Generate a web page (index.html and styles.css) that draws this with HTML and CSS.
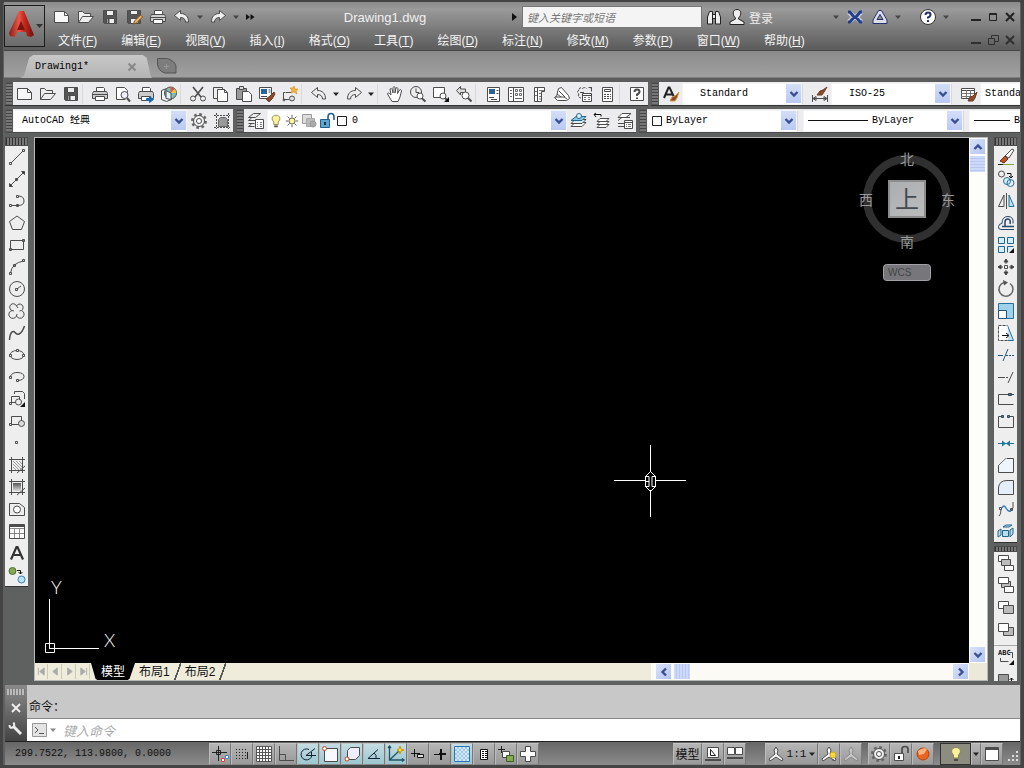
FILE: index.html
```html
<!DOCTYPE html>
<html lang="zh-CN">
<head>
<meta charset="utf-8">
<title>Drawing1.dwg</title>
<link rel="stylesheet" href="styles.css">
</head>
<body>
<svg class="sprite" aria-hidden="true">
  <defs>
    <linearGradient id="red" x1="0" x2="1"><stop offset="0" stop-color="#8d1a14"/><stop offset=".4" stop-color="#e8584a"/><stop offset=".6" stop-color="#c92a1c"/><stop offset="1" stop-color="#6e0f0a"/></linearGradient>
    <linearGradient id="shade" x2="0" y2="1"><stop offset="0" stop-color="#555"/><stop offset="1" stop-color="#ddd"/></linearGradient>
    <linearGradient id="face" x2="1" y2="1"><stop offset="0" stop-color="#aaadb0"/><stop offset="1" stop-color="#bdbdbd"/></linearGradient>
    <pattern id="check" width="4" height="4" patternUnits="userSpaceOnUse"><rect width="4" height="4" fill="#9cc8f0" stroke="none"/><rect width="2" height="2" fill="#d5e9fa" stroke="none"/><rect x="2" y="2" width="2" height="2" fill="#d5e9fa" stroke="none"/></pattern>
  </defs>
  <symbol id="new" viewBox="0 0 18 18"><path fill="#f8f8f8" d="M1.500 3.500h10l4 4v7h-14z"/><path d="M11.500 3.500v4h4"/></symbol>
  <symbol id="open" viewBox="0 0 18 18"><path fill="#eee" d="M1.500 14.500v-11h4l2 2h6v3"/><path fill="#eee" d="M1.500 14.500l4-6h11l-5 6z"/></symbol>
  <symbol id="save" viewBox="0 0 18 18"><path fill="#555" d="M2.500 2.500h13v13h-12l-1-1z"/><path fill="#eee" d="M5.500 2.500h7v5h-7zM5.500 10.500h8v5h-8z"/><path d="M7.500 11v4" stroke-width="2"/></symbol>
  <symbol id="saveas" viewBox="0 0 18 18"><path fill="#555" d="M2.500 2.500h13v13h-12l-1-1z"/><path fill="#eee" d="M5.500 2.500h7v4h-7zM5.500 10.500h8v5h-8z"/><path fill="#e9b568" d="M9.500 13l6-6 2 2-6 6-3 1z" stroke="#805020"/></symbol>
  <symbol id="print" viewBox="0 0 18 18"><path fill="#fff" d="M5.500 6.500v-4h7l1 1v3"/><path fill="#ccc" d="M2.500 6.500h13l1 2v5h-15v-5z"/><path fill="#fff" d="M4.500 11.500h9v4h-9z"/><path d="M2 9.500h14"/></symbol>
  <symbol id="preview" viewBox="0 0 18 18"><path fill="#fff" d="M11.500 14.500h-9v-12h8l3 3v2"/><circle cx="10.500" cy="10" r="3.500" fill="#eef"/><path d="M13 13l3 3.500" stroke-width="2"/></symbol>
  <symbol id="plot" viewBox="0 0 18 18"><path fill="#fff" d="M5.500 6.500v-4h7l1 1v3"/><path fill="#ccc" d="M2.500 6.500h13l1 2v5h-15v-5z"/><path fill="#fff" d="M4.500 11.500h9v4h-9z"/><path fill="#1768b5" stroke="#1768b5" d="M9.500 13.500h3v-2l4 3-4 3v-2h-3z"/></symbol>
  <symbol id="globe" viewBox="0 0 18 18"><path fill="#f4f4f4" d="M1.500 5.500l5-2 5 2v9l-5 2-5-2z"/><circle cx="10.500" cy="8" r="6" fill="#7fc0b0"/><path d="M10.500 2v6l4-4a6 6 0 0 0-4-2z" fill="#e05040" stroke="none"/><path d="M10.500 8h6a6 6 0 0 0-2-4z" fill="#f0c040" stroke="none"/><path d="M6 5.500v8l5 1V8z" fill="#dff0ff"/></symbol>
  <symbol id="cut" viewBox="0 0 18 18"><path stroke-width="1.600" d="M4 2l8 10M14 2L6 12"/><circle cx="4" cy="13.500" r="2.500"/><circle cx="14" cy="13.500" r="2.500"/></symbol>
  <symbol id="copy" viewBox="0 0 18 18"><path fill="#eee" d="M1.500 2.500h9v11h-9z"/><path fill="#fff" d="M5.500 4.500h7l3 3v9h-10z"/><path d="M12.500 4.500v3h3"/></symbol>
  <symbol id="paste" viewBox="0 0 18 18"><path fill="#999" d="M1.500 3.500h10v11h-10z"/><path fill="#ddd" d="M4.500 1.500h4v3h-4z"/><path fill="#fff" d="M7.500 6.500h6l3 3v7h-9z"/></symbol>
  <symbol id="brush" viewBox="0 0 18 18"><path fill="#fff" d="M1.500 2.500h12v11h-12z"/><path fill="#29639a" stroke="none" d="M3 4h6v5H3z"/><path d="M10.500 5h2M10.500 7h2M3 11.500h6"/><path fill="#8b4a2b" stroke="#6c3a20" d="M16 7l-4 4-4 3 3 3 3-3 3-5z"/></symbol>
  <symbol id="block" viewBox="0 0 18 18"><path d="M4.500 7.500h-2v7h6M5 7.500h5"/><circle cx="11" cy="13.500" r="2.500" fill="#ddd"/><circle cx="3" cy="15" r="1"/><path fill="#f7b23c" stroke="#d58a1a" stroke-width=".6" d="M13 1l1 3 3 0-2 2 1 3-3-2-3 1 1-3-2-2h3z"/></symbol>
  <symbol id="undo" viewBox="0 0 18 18"><path fill="#eee" d="M1.500 7.500l6-5v3c5 0 8 3 8 8.500h-3c0-3-2-4.500-5-4.500v3z"/></symbol>
  <symbol id="redo" viewBox="0 0 18 18"><path fill="#eee" d="M16.500 7.500l-6-5v3c-5 0-8 3-8 8.500h3c0-3 2-4.500 5-4.500v3z"/></symbol>
  <symbol id="caret" viewBox="0 0 8 8"><path d="M1 2.500h6L4 6z" fill="currentColor" stroke="none"/></symbol>
  <symbol id="more" viewBox="0 0 10 8"><path d="M1 1l4 3-4 3zM5.500 1l4 3-4 3z" fill="#111" stroke="none"/></symbol>
  <symbol id="pan" viewBox="0 0 18 18"><path fill="#fff" d="M6 16.500L1.500 9c0-2 2-1 3.500 1L4 4c1-1 2 0 2.500 1L7 8V2.500c1-1 2-1 2 0V8l1-5c1-1 2 0 2 1l-.500 4.500L13.500 5c1-1 2 0 2 1L14 12l-2 4.500z"/></symbol>
  <symbol id="zoomrt" viewBox="0 0 18 18"><circle cx="7" cy="7" r="5.500" fill="#eee"/><path d="M7 3.500v4h3"/><circle cx="11" cy="11" r="3" fill="#fff"/><path stroke-width="2" d="M13 13.500l3.500 3"/></symbol>
  <symbol id="zoomwin" viewBox="0 0 18 18"><path fill="#fff" d="M1.500 2.500h11v10h-11z"/><circle cx="11" cy="11" r="3" fill="#fff"/><path stroke-width="2" d="M13 13l2 2"/><path fill="#111" stroke="none" d="M17 12v5h-5z"/></symbol>
  <symbol id="zoomprev" viewBox="0 0 18 18"><path fill="#ddd" d="M1.500 5.500l4-4v2.500h5v3.500h-5V10z"/><circle cx="10.500" cy="10.500" r="3.500" fill="#fff"/><path stroke-width="2" d="M13 13l3.500 3.500"/></symbol>
  <symbol id="props" viewBox="0 0 18 18"><path fill="#fff" d="M3.500 2.500h12v14h-12z"/><path fill="#29639a" stroke="none" d="M5 4h6v5H5z"/><path d="M12.500 5.500h2M12.500 8.500h2M5 12.500h5M7 14.500h6"/></symbol>
  <symbol id="dcenter" viewBox="0 0 18 18"><path fill="#fff" d="M1.500 2.500h15v14h-15zM6.500 3v13"/><path stroke="#666" d="M3 5.500h2M3 8.500h2M3 11.500h2M8.500 4.500h2v2h-2zM12.500 4.500h2v2h-2zM8.500 8.500h2v2h-2zM12.500 8.500h2v2h-2zM8 13.500h7"/></symbol>
  <symbol id="palette" viewBox="0 0 18 18"><path fill="#fff" d="M4.500 2.500h10v4h-3v10h-7zM7.500 3v13"/><path stroke="#777" d="M9 5.500h5M9 8.500h2M9 11.500h2M9 14h2M5 6.500h2M5 10.500h2"/></symbol>
  <symbol id="sheets" viewBox="0 0 18 18"><path fill="#fff" d="M5.500 3.500l3-1 7 8 1 3-3 2h-9l-3-3 2-1z"/><path d="M2 12h9l3 2M6 6l6 6M4 9l4 3"/></symbol>
  <symbol id="markup" viewBox="0 0 18 18"><path d="M3 4.500q1-3 3.500-1 2-2 4 0M15 4q1-1 0-2M3 5q-3 2 0 4-2 3 2 4" stroke-dasharray="3 1"/><path d="M12.500 2.500h3v4M4 7.500h4"/><path fill="#fff" d="M6.500 8.500h9v8h-9zM7 10.500h8"/><path stroke="#777" d="M8 12.500h2M12 12.500h2M8 14.500h2M12 14.500h2"/></symbol>
  <symbol id="calc" viewBox="0 0 18 18"><path fill="#fff" d="M3.500 2.500h10v14h-10z"/><path d="M5.500 4.500h6v2h-6z"/><path d="M5 9.500h7M5 11.500h7M5 13.500h7" stroke-dasharray="2 1"/></symbol>
  <symbol id="help" viewBox="0 0 18 18"><path fill="#fff" d="M2.500 2.500h13v13h-13z"/><path stroke-width="2" d="M6.500 7q0-2.500 2.500-2.500t2.500 2-2.500 3v1.500M9 12.500v1.500"/></symbol>
  <symbol id="astyle" viewBox="0 0 18 18"><path stroke="#222" stroke-width="2" d="M2 13L6.500 2.500h1L12 12M4 9.500h6"/><path fill="#8b4a2b" stroke="#d49b3c" d="M17 7l-4 4-3 1-2 4h5l2-3z"/></symbol>
  <symbol id="dimstyle" viewBox="0 0 18 18"><path d="M1.500 10v7M16.500 10v7M2 13.500h14M2 13.500l3-2v4zM16 13.500l-3-2v4z"/><path fill="#8b4a2b" stroke="#6c3a20" d="M16 2l-4 3-3 1-3 4h5l2-3z"/></symbol>
  <symbol id="tablestyle" viewBox="0 0 18 18"><path fill="#fff" d="M1.500 3.500h13v10h-13z"/><path d="M1 5.500h14"/><path stroke="#777" d="M1 8.500h13M1 11.500h10M6.500 5v8M10.500 5v8"/><path fill="#8b4a2b" stroke="#6c3a20" d="M17 7l-4 4-3 1-2 4h5l2-3z"/></symbol>
  <symbol id="gear" viewBox="0 0 18 18"><circle cx="9" cy="9" r="6.800" stroke-width="2.400" stroke-dasharray="2.700 2.640" stroke="#666"/><circle cx="9" cy="9" r="5.500" fill="#eee"/><circle cx="9" cy="9" r="2.500" fill="#fff"/></symbol>
  <symbol id="wssave" viewBox="0 0 18 18"><path stroke-dasharray="2 1" d="M1 3.500h16M1 15.500h16M3.500 1v16M15.500 1v16"/><path fill="#999" stroke="#666" d="M5.500 14.500v-7l2-2h5l2 2v7z"/></symbol>
  <symbol id="layers" viewBox="0 0 18 18"><path d="M6.500 1.500h7l-5 4h-7zM1.500 8.500h7M1.500 8.500l3-2.500M1.500 11.500h6M1.500 14.500h6M1.500 14.500l3-2.500"/><path fill="#fff" d="M8.500 7.500h8v9h-8z"/><path stroke="#777" d="M10 10.500h1M13 10.500h2M10 12.500h1M13 12.500h2M10 14.500h1M13 14.500h2"/></symbol>
  <symbol id="bulb" viewBox="0 0 18 18"><path fill="#f7f29b" stroke="#8a8250" d="M9 2.500c-5 0-5.500 5-2.500 7.500v3h5v-3c3-2.500 2.500-7.500-2.500-7.500z"/><path stroke-width="2" d="M7 15h4"/></symbol>
  <symbol id="sun" viewBox="0 0 18 18"><circle cx="9" cy="9" r="3.500" fill="#f7f29b"/><path d="M9 2v2.500M9 13.500V16M2 9h2.500M13.500 9H16M4 4l2 2M12 12l2 2M14 4l-2 2M4 14l2-2"/></symbol>
  <symbol id="vpfreeze" viewBox="0 0 18 18"><path fill="#ddd" stroke="#999" d="M2.500 2.500h9v9h-9z"/><path fill="#bbb" stroke="#aaa" d="M6.500 6.500h8v8h-8z"/><circle cx="13" cy="12" r="3" fill="#aaa" stroke="#999"/></symbol>
  <symbol id="unlock" viewBox="0 0 18 18"><path d="M10 8V5q0-3.500 3-3.500T16 5v3" stroke="#235f8c" stroke-width="1.600"/><path fill="#5fa5cf" stroke="#235f8c" d="M2.500 7.500h9v8h-9z"/><path stroke="#134" stroke-width="2" d="M7 10v3"/></symbol>
  <symbol id="box" viewBox="0 0 12 18"><path stroke="#222" fill="#fff" d="M.500 4.500h9v9h-9z"/></symbol>
  <symbol id="lay1" viewBox="0 0 18 18"><path fill="#fff" d="M5 10.500h11l-4 4H1z"/><path fill="#d7eefa" d="M5 7.500h11l-4 4H1z"/><path fill="#8bc7e6" stroke="#25658d" d="M6 4.500h10l-4 4H1z"/><circle cx="9" cy="4" r="2.500" fill="#e4f5ff" stroke="#25658d"/></symbol>
  <symbol id="lay2" viewBox="0 0 18 18"><path fill="#fff" d="M7 12.500h9l-3 3H4zM7 9.500h9l-3 3H4zM7 6.500h9l-3 3H4z"/><path stroke="#111" d="M1 2.500h7v2M3 1L1 2.500 3 5"/></symbol>
  <symbol id="lay3" viewBox="0 0 18 18"><path fill="#fff" d="M6 1.500h9l-5 4H2zM2 8.500l4-3h8M2 11.500h6M2 14.500h6"/><path fill="#fff" d="M8.500 8.500h8v8h-8zM9 10.500h7"/><path stroke="#777" d="M10 12.500h1M12 12.500h3M10 14.500h1M12 14.500h3"/></symbol>
  <symbol id="chev" viewBox="0 0 10 8"><path stroke="#3a4f8f" stroke-width="2.400" d="M1.500 2L5 5.500 8.500 2"/></symbol>

  <symbol id="line" viewBox="0 0 18 18"><path d="M3 15L15 3M1.500 14.500h2v2h-2zM14.500 1.500h2v2h-2z"/></symbol>
  <symbol id="xline" viewBox="0 0 18 18"><path d="M2 16L16 2M7.500 8.500h2v2h-2z"/><path fill="#333" d="M1.500 16.500v-3l3 3zM16.500 1.500v3l-3-3z"/></symbol>
  <symbol id="pline" viewBox="0 0 18 18"><path d="M3 13.500h7q6 0 6-4.500t-5-5M1.500 12.500h2v2h-2zM8.500 12.500h2v2h-2zM8.500 3.500h2v2h-2z"/></symbol>
  <symbol id="polygon" viewBox="0 0 18 18"><path d="M9 2l7.500 5.500-3 8h-9l-3-8z"/></symbol>
  <symbol id="rect" viewBox="0 0 18 18"><path d="M2.500 4.500h13v9h-13zM1.500 12.500h2v2h-2zM14.500 3.500h2v2h-2z"/></symbol>
  <symbol id="arc" viewBox="0 0 18 18"><path d="M2.500 15Q4 5 15.500 3M1.500 14.500h2v2h-2zM5.500 6.500h2v2h-2zM14.500 1.500h2v2h-2z"/></symbol>
  <symbol id="circle" viewBox="0 0 18 18"><circle cx="9" cy="9" r="7.500"/><path d="M9 9l4-3M7.500 8.500h2v2h-2z"/></symbol>
  <symbol id="cloud" viewBox="0 0 18 18"><path d="M8.500 4A3.500 3.500 0 1 0 4 8.500a4 4 0 1 0 4.500 5.500 4 4 0 1 0 5-5.500A3.500 3.500 0 1 0 8.500 4l1.500 2M4 8.500l2 .5M8.500 14l.5-2M13.500 8.500l-2 .5"/></symbol>
  <symbol id="spline" viewBox="0 0 18 18"><path stroke-width="1.500" d="M1.500 16C2 8 5 6 7 8.500S13 12 16.500 2"/></symbol>
  <symbol id="ellipse" viewBox="0 0 18 18"><ellipse cx="9" cy="9" rx="7" ry="4.500"/><path fill="#fff" d="M1.500 8.500h2v2h-2zM14.500 8.500h2v2h-2zM8.500 3.500h2v2h-2z"/></symbol>
  <symbol id="earc" viewBox="0 0 18 18"><path d="M2 9q2-5 8-4.500t6 4-6 4M1.500 8.500h2v2h-2zM8.500 11.500h2v2h-2z"/></symbol>
  <symbol id="insert" viewBox="0 0 18 18"><path d="M6.500 4V1.500h8l2 2V9"/><path fill="#eee" d="M3.500 6.500h8v6h-8z"/><circle cx="10.500" cy="12" r="3" fill="#eee"/><path d="M1.500 12.500h2v2h-2z"/><path fill="#111" stroke="none" d="M17 12v5h-5z"/></symbol>
  <symbol id="mkblock" viewBox="0 0 18 18"><path d="M3.500 4.500h10v8h-10zM1.500 11.500h2v2h-2z"/><circle cx="13.500" cy="11.500" r="3" fill="#ddd"/></symbol>
  <symbol id="point" viewBox="0 0 18 18"><path d="M7.500 7.500h2v2h-2z"/></symbol>
  <symbol id="hatch" viewBox="0 0 18 18"><path d="M1 3.500h16M1 14.500h16M3.500 1v16M14.500 1v16M9 17l8-7"/><path stroke="#888" stroke-width=".8" d="M5 5l9 9M8 5l6 6M11 5l3 3M5 8l6 6M5 11l3 3"/></symbol>
  <symbol id="gradient" viewBox="0 0 18 18"><path fill="url(#shade)" stroke="none" d="M5 5h8v8H5z"/><path d="M1 3.500h16M1 14.500h16M3.500 1v16M14.500 1v16M9 17l8-7"/></symbol>
  <symbol id="region" viewBox="0 0 18 18"><path d="M1.500 3.500h10l5 4v8h-15z"/><circle cx="9" cy="9.500" r="3.500" fill="#fff"/></symbol>
  <symbol id="table" viewBox="0 0 18 18"><path fill="#fff" d="M1.500 2.500h15v14h-15z"/><path stroke-width="2" d="M1 4h16"/><path stroke="#888" d="M2 6.500h14M2 11.500h14M6.500 6v10M11.500 6v10"/></symbol>
  <symbol id="mtext" viewBox="0 0 18 18"><path stroke="#333" stroke-width="2.200" d="M3 15.500L8.500 3h1L15 15.500M5 11h8"/></symbol>
  <symbol id="addsel" viewBox="0 0 18 18"><circle cx="4.500" cy="5" r="3.500" fill="#86a653" stroke="#4c6f2c"/><circle cx="13.500" cy="13.500" r="3.500" fill="#b9e0fa" stroke="#3f80b0"/><path stroke="#111" d="M9 4.500h3.500v3.500M10.500 6l2 2 2-2"/></symbol>

  <symbol id="erase" viewBox="0 0 18 18"><path fill="#fff" d="M8 8l7-7 2 1-5 8z"/><path fill="#b5552c" stroke="#703018" d="M8 8l3 3-4 4-4-2z"/><path stroke="#7ba34b" d="M2 16.500h15"/><path stroke="#222" d="M1 16.500h5"/></symbol>
  <symbol id="mcopy" viewBox="0 0 18 18"><circle cx="4.500" cy="4" r="3"/><path stroke="#111" d="M10 3.500h4v4M12 6l2 2 2-2"/><circle cx="10" cy="11" r="3.500" stroke="#2a6f9c" fill="#d4ecfa"/><circle cx="13.500" cy="13" r="3.500" stroke="#2a6f9c"/></symbol>
  <symbol id="mirror" viewBox="0 0 18 18"><path d="M7 3v11.500H1.500z"/><path d="M9.500 1v16"/><path stroke="#2a6f9c" fill="#bfe2f5" d="M12 3v11.500h5z"/></symbol>
  <symbol id="offset" viewBox="0 0 18 18"><path stroke="#26466b" d="M17 15.500H4q-3 0-2.500-3T5 9.500q0-7 6-7t5 7"/><path stroke="#26466b" stroke-width="1.500" d="M17 12.500H5M8 12V8q0-3 3-3t2 5"/></symbol>
  <symbol id="array" viewBox="0 0 18 18"><path stroke="#22668e" fill="#d5edf9" d="M1.500 1.500h6v6h-6zM10.500 1.500h6v6h-6zM1.500 10.500h6v6h-6zM10.500 16.500v-6h6"/><path fill="#111" stroke="none" d="M17 12v5h-5z"/></symbol>
  <symbol id="move" viewBox="0 0 18 18"><path d="M9 1v5M9 12v5M1 9h5M12 9h5M7.500 7.500h3v3h-3z"/><path fill="#333" d="M9 1L7 4h4zM9 17l-2-3h4zM1 9l3-2v4zM17 9l-3-2v4z"/></symbol>
  <symbol id="rotate" viewBox="0 0 18 18"><path stroke="#666" stroke-width="1.500" d="M7 2.500a7 7 0 1 0 6 1"/><path fill="#555" stroke="none" d="M6 0l5 2.500L7 5.500z"/></symbol>
  <symbol id="scale" viewBox="0 0 18 18"><path stroke="#2a6f9c" fill="#9fd2ea" d="M1.500 1.500h15v15h-15z"/><path stroke="#22557b" fill="#fff" d="M1.500 8.500h8v8h-8z"/></symbol>
  <symbol id="stretch" viewBox="0 0 18 18"><path stroke="#2a6f9c" fill="#c0e3f5" d="M10.500 1.500l6 15h-6"/><path fill="#fff" d="M10.500 16.500h-9v-15h9" stroke-dasharray="3 1"/><path stroke="#111" d="M5 11.500h6M9 9l3 2.500L9 14"/></symbol>
  <symbol id="trim" viewBox="0 0 18 18"><path stroke="#23587c" d="M1 9.500h5M6 15l5-12"/><path stroke="#23587c" stroke-dasharray="2 1" d="M9 9.500h8"/></symbol>
  <symbol id="extend" viewBox="0 0 18 18"><path d="M1 9.500h5M11 15l5-11"/><path stroke-dasharray="2 1" d="M6 9.500h6"/></symbol>
  <symbol id="break1" viewBox="0 0 18 18"><path d="M12 4.500H1.500v10h15"/><path fill="#4a7c96" stroke="#345" d="M11.500 3.500h3v2h-3zM15 4.500h2"/></symbol>
  <symbol id="break2" viewBox="0 0 18 18"><path d="M4 4.500H1.500v11h15v-11H13"/><path fill="#4a9a96" stroke="#345" d="M4.500 3.500h2v2h-2zM10.500 3.500h2v2h-2z"/></symbol>
  <symbol id="join" viewBox="0 0 18 18"><path stroke="#23769e" d="M1 9.500h16"/><path fill="#23769e" stroke="none" d="M5 6.500l4 3-4 3zM13 6.500l-4 3 4 3z"/></symbol>
  <symbol id="chamfer" viewBox="0 0 18 18"><path d="M1 10l8-7.500"/><path fill="#eef6fc" d="M1.500 10v6.500h15v-14h-7"/></symbol>
  <symbol id="fillet" viewBox="0 0 18 18"><path fill="#e5edf8" d="M1.500 16.500V10Q2 2.500 10 2.500h6.500v14z"/></symbol>
  <symbol id="blend" viewBox="0 0 18 18"><path d="M2 16q2-1 2-7M16 2v6q-1 2-3 2M2.500 7.500h2v2h-2zM13.500 8.500h2v2h-2z"/><path stroke="#3984b4" stroke-width="1.500" d="M5 8q2-4 4 0t5 3"/></symbol>
  <symbol id="explode" viewBox="0 0 18 18"><path stroke="#22668e" fill="#b9def2" d="M5.500 8.500h6v6h-6zM1 9l3-2v6l-3 2zM13 8l3-2v6l-3 3zM6 5l3-2h6l-3 2z"/></symbol>
  <symbol id="ord1" viewBox="0 0 18 18"><path fill="#fff" d="M1.500 1.500h10v6h-10zM7.500 11.500h9v5h-9z"/><path fill="#bbb" d="M4.500 5.500h9v6h-9z"/></symbol>
  <symbol id="ord2" viewBox="0 0 18 18"><path fill="#bbb" d="M4.500 5.500h9v6h-9z"/><path fill="#fff" d="M1.500 1.500h10v6h-10zM7.500 10.500h9v6h-9z"/></symbol>
  <symbol id="ord3" viewBox="0 0 18 18"><path fill="#fff" d="M1.500 3.500h10v7h-10z"/><path fill="#bbb" d="M6.500 7.500h10v8h-10z"/></symbol>
  <symbol id="ord4" viewBox="0 0 18 18"><path fill="#bbb" d="M6.500 7.500h10v8h-10z"/><path fill="#fff" d="M1.500 3.500h10v8h-10z"/></symbol>
  <symbol id="hback" viewBox="0 0 18 18"><path fill="#999" d="M1.500 4.500h10v9h-10z"/><path stroke="#111" d="M14.500 16V8M12.500 10l2-2 2 2"/></symbol>

  <symbol id="infer" viewBox="0 0 18 18"><path stroke="#222" d="M7.500 1v15M1 7.500h15M5.500 5.500h4v4h-4z"/><path stroke="#c44" d="M10.500 13.500h3v3h-3z" fill="#fff"/><path stroke="#38c" d="M14.500 10.500h3v3h-3z" fill="#fff"/></symbol>
  <symbol id="snap" viewBox="0 0 18 18"><path stroke="#222" stroke-dasharray="1 2" d="M3 4.500h12M3 7.500h12M3 10.500h12M3 13.500h12"/><path stroke="#222" d="M14.500 7v7"/></symbol>
  <symbol id="grid" viewBox="0 0 18 18"><path fill="#fff" stroke="#555" d="M1.500 1.500h15v15h-15zM4.500 1v16M7.500 1v16M10.500 1v16M13.500 1v16M1 4.500h16M1 7.500h16M1 10.500h16M1 13.500h16"/></symbol>
  <symbol id="ortho" viewBox="0 0 18 18"><path d="M2.500 1v14.500H17M2.500 9.500h6v6"/></symbol>
  <symbol id="polar" viewBox="0 0 18 18"><path stroke="#123" d="M13 10a5.500 5.500 0 1 1-3-5.500M7 10.500l9-7M7 10.500h10M12.500 7v4"/></symbol>
  <symbol id="osnap" viewBox="0 0 18 18"><path fill="#f8f8ff" d="M3.500 3.500h13v13h-13z"/><circle cx="3.500" cy="3.500" r="2" fill="#fff" stroke="#d6421d"/></symbol>
  <symbol id="osnap3" viewBox="0 0 18 18"><path fill="#eef" d="M4.500 5.500l3-3h9v8l-4 4h-8z"/><circle cx="4" cy="14" r="2" fill="#fff" stroke="#d6421d"/></symbol>
  <symbol id="otrack" viewBox="0 0 18 18"><path stroke="#123" d="M3 13.500h12M3 13.500l10-9M9 8q3 2 2 5"/></symbol>
  <symbol id="ducs" viewBox="0 0 18 18"><path stroke="#256" stroke-width="1.300" d="M2.500 1v14h15M2.500 15L12 6M1 3l1.500-2L4 3M15 13.500l2 1.500-2 1.500"/><path fill="#fbd85b" stroke="#c90" d="M13 1l1 3 3 1-3 1-1 3-1-3-2-1 2-1z"/></symbol>
  <symbol id="dyn" viewBox="0 0 18 18"><path stroke="#111" d="M5.500 4v8M2 8.500h9"/><path stroke="#111" fill="#ddd" d="M8.500 9.500h6v3h-6z"/></symbol>
  <symbol id="lwt" viewBox="0 0 18 18"><path stroke="#111" d="M3 9.500h8"/><path stroke="#111" stroke-width="2" d="M10 4v11M8 9h7"/></symbol>
  <symbol id="tpy" viewBox="0 0 18 18"><path fill="url(#check)" stroke="#2d72b5" d="M1.500 1.500h15v15h-15z"/></symbol>
  <symbol id="qp" viewBox="0 0 18 18"><path fill="#fff" stroke="#111" d="M5.500 4.500h7v10h-7z"/><path stroke="#111" stroke-dasharray="2 1" d="M7 6.500h5M7 8.500h5M7 10.500h5M7 12.500h5"/></symbol>
  <symbol id="sc" viewBox="0 0 18 18"><path stroke="#222" d="M4.500 1v7M1 4.500h7"/><path fill="#fff" d="M5.500 6.500h7v6h-7z"/><path fill="#82a850" stroke="#3f5e24" d="M9.500 10.500h7v6h-7z"/></symbol>
  <symbol id="am" viewBox="0 0 18 18"><path fill="#fff" d="M6.500 1.500h5v5h5v5h-5v5h-5v-5h-5v-5h5z"/></symbol>
  <symbol id="modelpaper" viewBox="0 0 18 18"><path fill="#fff" d="M3.500 2.500h11v10h-11z"/><path stroke-width="2" d="M1 15h16"/><path stroke="#222" d="M6.500 4.500v6h5z"/></symbol>
  <symbol id="quickview" viewBox="0 0 18 18"><path fill="#fff" d="M1.500 2.500h7v7h-7zM9.500 2.500h7v7h-7z"/><path stroke-width="2" d="M1 13h16"/></symbol>
  <symbol id="scaleic" viewBox="0 0 18 18"><path fill="#fff" d="M9 2l2 3-1 4 6 5-1 2-6-4-6 4-1-2 6-5-1-4z"/></symbol>
  <symbol id="annvis" viewBox="0 0 18 18"><path fill="#fff" d="M9 2l2 3-1 4 6 5-1 2-6-4-6 4-1-2 6-5-1-4z"/><circle cx="13" cy="10" r="3" fill="#f8d840" stroke="#d8a820"/><path d="M12 15h2"/></symbol>
  <symbol id="annauto" viewBox="0 0 18 18"><path fill="#c8c8c8" stroke="#888" d="M9 2l2 3-1 4 6 5-1 2-6-4-6 4-1-2 6-5-1-4z"/></symbol>
  <symbol id="lockui" viewBox="0 0 18 18"><path stroke-width="1.700" d="M10 9V4q0-2.500 3-2.500T16 4v4"/><path fill="#fff" d="M2.500 8.500h9v7h-9z"/><path stroke="#222" stroke-width="2" d="M7 11v3"/></symbol>
  <symbol id="iso" viewBox="0 0 18 18"><circle cx="9" cy="9" r="6" fill="#e8641f" stroke="#b4420f"/><path fill="#ffb27c" stroke="none" d="M4 6q5-4 9-2l-3 5-5 1z"/></symbol>
  <symbol id="clean" viewBox="0 0 18 18"><path fill="#fff" d="M2.500 2.500h13v13h-13z"/><path stroke-width="2" d="M2 4h14"/></symbol>
  <symbol id="binoc" viewBox="0 0 18 18"><path fill="#eee" stroke="#222" d="M2.500 9l2-5.500h3V16h-5zM10.500 3.500h3l2 5.500v7h-5zM7.500 6.500h3v4h-3z"/></symbol>
  <symbol id="user" viewBox="0 0 18 18"><path fill="#eee" stroke="#222" d="M9 1.500c-5 0-4.500 6-1.500 8.500v1L2 14v2.500h14V14l-5.500-3v-1c3-2.500 3.500-8.500-1.500-8.500z"/></symbol>
  <symbol id="exch" viewBox="0 0 18 18"><path stroke="#ccd" stroke-width="5" d="M3 4l5 5-5 5M15 4l-5 5 5 5"/><path stroke="#25408b" stroke-width="3" d="M2 4h2l4 5-4 5H2M16 4h-2l-4 5 4 5h2"/></symbol>
  <symbol id="tri" viewBox="0 0 18 18"><path fill="#dde" stroke="#26306b" d="M7.500 2.500h3L16 12v3.500H2V12zM9 6.500l-3 5h6z"/></symbol>
  <symbol id="qmark" viewBox="0 0 18 18"><circle cx="9" cy="9" r="7.500" fill="#fff" stroke="#333"/><path stroke="#26306b" stroke-width="2" d="M6.500 7q0-2.500 2.500-2.500t2.500 2-2.500 3v1M9 12v2"/></symbol>
  <symbol id="wmin" viewBox="0 0 12 12"><path stroke="#222" stroke-width="2" d="M1 9h10"/></symbol>
  <symbol id="wmax" viewBox="0 0 12 12"><path stroke="#222" d="M2.500 2.500h7v7h-7zM2 3.500h8"/></symbol>
  <symbol id="wrest" viewBox="0 0 12 12"><path stroke="#222" d="M4.500 4V1.500h7v6H8M1.500 4.500h6v6h-6z"/></symbol>
  <symbol id="wx" viewBox="0 0 12 12"><path stroke="#222" stroke-width="2" d="M2 2l8 8M10 2l-8 8"/></symbol>
</svg>

<header class="titlebar">
  <button class="logo" aria-label="应用程序菜单">
    <svg width="38" height="38" viewBox="0 0 38 38"><path fill="url(#red)" d="M13 4h5l10 24-3 2-4-1-1-4h-9l-2 5-5-1-1-3z"/><path fill="#7d150f" d="M15 14l4 9h-8z"/><path fill="#333" d="M30 17h7l-3.500 4z"/></svg>
  </button>
  <div class="head-rows">
    <div class="quick">
      <button class="qb" aria-label="新建"><svg class="ic"><use href="#new"/></svg></button>
      <button class="qb" aria-label="打开"><svg class="ic"><use href="#open"/></svg></button>
      <button class="qb" aria-label="保存"><svg class="ic"><use href="#save"/></svg></button>
      <button class="qb" aria-label="另存为"><svg class="ic"><use href="#saveas"/></svg></button>
      <button class="qb" aria-label="打印"><svg class="ic"><use href="#print"/></svg></button>
      <button class="qb" aria-label="放弃"><svg class="ic"><use href="#undo"/></svg></button>
      <button class="cb" aria-label="放弃列表"><svg class="ca"><use href="#caret"/></svg></button>
      <button class="qb" aria-label="重做"><svg class="ic"><use href="#redo"/></svg></button>
      <button class="cb" aria-label="重做列表"><svg class="ca"><use href="#caret"/></svg></button>
      <button class="mb" aria-label="更多"><svg width="10" height="8"><use href="#more"/></svg></button>
      <h1>Drawing1.dwg</h1>
      <svg width="6" height="8" class="point"><path d="M0 0l5 4-5 4z" fill="#111"/></svg>
      <input class="search" type="text" placeholder="键入关键字或短语" aria-label="搜索">
      <button class="qb" aria-label="查找"><svg class="ic"><use href="#binoc"/></svg></button>
      <button class="login"><svg class="ic"><use href="#user"/></svg>登录</button>
      <div class="services">
        <button class="cb" aria-label="登录菜单"><svg class="ca"><use href="#caret"/></svg></button>
        <button class="qb" aria-label="Exchange"><svg class="ic"><use href="#exch"/></svg></button>
        <button class="qb" aria-label="服务"><svg class="ic"><use href="#tri"/></svg></button>
        <button class="cb" aria-label="服务菜单"><svg class="ca"><use href="#caret"/></svg></button>
        <button class="qb ask" aria-label="帮助"><svg class="ic"><use href="#qmark"/></svg></button>
        <button class="cb" aria-label="帮助菜单"><svg class="ca"><use href="#caret"/></svg></button>
      </div>
      <div class="win">
        <button aria-label="最小化"><svg><use href="#wmin"/></svg></button>
        <button aria-label="最大化"><svg><use href="#wmax"/></svg></button>
        <button aria-label="关闭"><svg><use href="#wx"/></svg></button>
      </div>
    </div>
    <nav class="menu">
      <a href="#">文件(<u>F</u>)</a><a href="#">编辑(<u>E</u>)</a><a href="#">视图(<u>V</u>)</a><a href="#">插入(<u>I</u>)</a><a href="#">格式(<u>O</u>)</a><a href="#">工具(<u>T</u>)</a><a href="#">绘图(<u>D</u>)</a><a href="#">标注(<u>N</u>)</a><a href="#">修改(<u>M</u>)</a><a href="#">参数(<u>P</u>)</a><a href="#">窗口(<u>W</u>)</a><a href="#">帮助(<u>H</u>)</a>
      <div class="win dim">
        <button aria-label="最小化图形"><svg><use href="#wmin"/></svg></button>
        <button aria-label="还原图形"><svg><use href="#wrest"/></svg></button>
        <button aria-label="关闭图形"><svg><use href="#wx"/></svg></button>
      </div>
    </nav>
  </div>
</header>

<div class="filetabs">
  <div class="filetab"><span>Drawing1*</span><button aria-label="关闭选项卡"><svg width="10" height="10" viewBox="0 0 10 10"><path d="M1.500 1.500l7 7M8.500 1.500l-7 7" stroke="#888" stroke-width="2"/></svg></button></div>
  <button class="newtab" aria-label="新图形"><svg width="24" height="18" viewBox="0 0 24 18"><path fill="#7d7d7d" stroke="#555" d="M3.500 1.500h10q8 3 8.500 8v6.500H11q-7-2-7.500-9z"/><path stroke="#999" d="M10 9.500h5M12.500 7v5"/></svg></button>
</div>

<div class="bars">
  <div class="barrow">
    <div class="bar">
      <i class="grip"></i>
      <button aria-label="新建"><svg class="ic"><use href="#new"/></svg></button>
      <button aria-label="打开"><svg class="ic"><use href="#open"/></svg></button>
      <button aria-label="保存"><svg class="ic"><use href="#save"/></svg></button>
      <i class="sep"></i>
      <button aria-label="打印"><svg class="ic"><use href="#print"/></svg></button>
      <button aria-label="打印预览"><svg class="ic"><use href="#preview"/></svg></button>
      <button aria-label="发布"><svg class="ic"><use href="#plot"/></svg></button>
      <button aria-label="三维打印"><svg class="ic"><use href="#globe"/></svg></button>
      <i class="sep"></i>
      <button aria-label="剪切"><svg class="ic"><use href="#cut"/></svg></button>
      <button aria-label="复制"><svg class="ic"><use href="#copy"/></svg></button>
      <button aria-label="粘贴"><svg class="ic"><use href="#paste"/></svg></button>
      <button aria-label="特性匹配"><svg class="ic"><use href="#brush"/></svg></button>
      <button aria-label="块编辑器"><svg class="ic"><use href="#block"/></svg></button>
      <i class="sep"></i>
      <button aria-label="放弃"><svg class="ic"><use href="#undo"/></svg></button>
      <button class="cb" aria-label="放弃列表"><svg class="ca"><use href="#caret"/></svg></button>
      <button aria-label="重做"><svg class="ic"><use href="#redo"/></svg></button>
      <button class="cb" aria-label="重做列表"><svg class="ca"><use href="#caret"/></svg></button>
      <i class="sep"></i>
      <button aria-label="平移"><svg class="ic"><use href="#pan"/></svg></button>
      <button aria-label="实时缩放"><svg class="ic"><use href="#zoomrt"/></svg></button>
      <button aria-label="窗口缩放"><svg class="ic"><use href="#zoomwin"/></svg></button>
      <button aria-label="缩放上一个"><svg class="ic"><use href="#zoomprev"/></svg></button>
      <i class="sep"></i>
      <button aria-label="特性"><svg class="ic"><use href="#props"/></svg></button>
      <button aria-label="设计中心"><svg class="ic"><use href="#dcenter"/></svg></button>
      <button aria-label="工具选项板"><svg class="ic"><use href="#palette"/></svg></button>
      <button aria-label="图纸集"><svg class="ic"><use href="#sheets"/></svg></button>
      <button aria-label="标记集"><svg class="ic"><use href="#markup"/></svg></button>
      <button aria-label="计算器"><svg class="ic"><use href="#calc"/></svg></button>
      <i class="sep"></i>
      <button aria-label="帮助"><svg class="ic"><use href="#help"/></svg></button>
    </div>
    <div class="bar tail">
      <i class="grip"></i>
      <button aria-label="文字样式"><svg class="ic"><use href="#astyle"/></svg></button>
      <div class="combo w120 indent"><select aria-label="文字样式"><option>Standard</option></select><span class="arrow"><svg><use href="#chev"/></svg></span></div>
      <i class="sep"></i>
      <button aria-label="标注样式"><svg class="ic"><use href="#dimstyle"/></svg></button>
      <div class="combo w120 indent"><select aria-label="标注样式"><option>ISO-25</option></select><span class="arrow"><svg><use href="#chev"/></svg></span></div>
      <i class="sep"></i>
      <button aria-label="表格样式"><svg class="ic"><use href="#tablestyle"/></svg></button>
      <div class="combo w120 tight"><select aria-label="表格样式"><option>Standard</option></select><span class="arrow"><svg><use href="#chev"/></svg></span></div>
    </div>
  </div>
  <div class="barrow">
    <div class="bar">
      <i class="grip"></i>
      <div class="combo w174"><select aria-label="工作空间"><option>AutoCAD 经典</option></select><span class="arrow"><svg><use href="#chev"/></svg></span></div>
      <button aria-label="工作空间设置"><svg class="ic"><use href="#gear"/></svg></button>
      <button aria-label="我的工作空间"><svg class="ic"><use href="#wssave"/></svg></button>
    </div>
    <div class="bar">
      <i class="grip"></i>
      <button aria-label="图层特性"><svg class="ic"><use href="#layers"/></svg></button>
      <div class="combo w300"><svg class="ic t"><use href="#bulb"/></svg><svg class="ic t"><use href="#sun"/></svg><svg class="ic"><use href="#vpfreeze"/></svg><svg class="ic"><use href="#unlock"/></svg><svg class="bx"><use href="#box"/></svg><select aria-label="图层"><option>0</option></select><span class="arrow"><svg><use href="#chev"/></svg></span></div>
      <button aria-label="置为当前"><svg class="ic"><use href="#lay1"/></svg></button>
      <button aria-label="上一个图层"><svg class="ic"><use href="#lay2"/></svg></button>
      <button aria-label="图层状态"><svg class="ic"><use href="#lay3"/></svg></button>
    </div>
    <div class="bar tail">
      <i class="grip"></i>
      <div class="combo w150 tight"><svg class="bx lead"><use href="#box"/></svg><select aria-label="颜色"><option>ByLayer</option></select><span class="arrow"><svg><use href="#chev"/></svg></span></div>
      <i class="sep"></i>
      <div class="combo w160 tight"><hr><select aria-label="线型"><option>ByLayer</option></select><span class="arrow"><svg><use href="#chev"/></svg></span></div>
      <i class="sep"></i>
      <div class="combo w160 short tight"><hr><select aria-label="线宽"><option>ByLayer</option></select><span class="arrow"><svg><use href="#chev"/></svg></span></div>
    </div>
  </div>
</div>

<main class="work">
  <div class="side">
    <div class="vbar">
      <i class="vgrip"></i>
      <button aria-label="直线"><svg class="ic"><use href="#line"/></svg></button>
      <button aria-label="构造线"><svg class="ic"><use href="#xline"/></svg></button>
      <button aria-label="多段线"><svg class="ic"><use href="#pline"/></svg></button>
      <button aria-label="多边形"><svg class="ic"><use href="#polygon"/></svg></button>
      <button aria-label="矩形"><svg class="ic"><use href="#rect"/></svg></button>
      <button aria-label="圆弧"><svg class="ic"><use href="#arc"/></svg></button>
      <button aria-label="圆"><svg class="ic"><use href="#circle"/></svg></button>
      <button aria-label="修订云线"><svg class="ic"><use href="#cloud"/></svg></button>
      <button aria-label="样条曲线"><svg class="ic"><use href="#spline"/></svg></button>
      <button aria-label="椭圆"><svg class="ic"><use href="#ellipse"/></svg></button>
      <button aria-label="椭圆弧"><svg class="ic"><use href="#earc"/></svg></button>
      <button aria-label="插入块"><svg class="ic"><use href="#insert"/></svg></button>
      <button aria-label="创建块"><svg class="ic"><use href="#mkblock"/></svg></button>
      <button aria-label="点"><svg class="ic"><use href="#point"/></svg></button>
      <button aria-label="图案填充"><svg class="ic"><use href="#hatch"/></svg></button>
      <button aria-label="渐变色"><svg class="ic"><use href="#gradient"/></svg></button>
      <button aria-label="面域"><svg class="ic"><use href="#region"/></svg></button>
      <button aria-label="表格"><svg class="ic"><use href="#table"/></svg></button>
      <button aria-label="多行文字"><svg class="ic"><use href="#mtext"/></svg></button>
      <button aria-label="添加选定对象"><svg class="ic"><use href="#addsel"/></svg></button>
    </div>
  </div>
  <section class="doc">
    <div class="canvas">
      <svg class="cube" width="100" height="140" viewBox="0 -8 100 140">
        <circle cx="50" cy="47" r="40" fill="none" stroke="#303030" stroke-width="8"/>
        <path fill="url(#face)" stroke="#8c8c8c" stroke-width="2" d="M32 29h36v36H32z"/>
        <text class="dir up" x="50" y="56">上</text>
        <text class="dir" x="50" y="12">北</text>
        <text class="dir" x="50" y="95">南</text>
        <text class="dir" x="9" y="53">西</text>
        <text class="dir" x="91" y="53">东</text>
        <rect x="26.500" y="112.500" width="47" height="16" rx="3" fill="#77777b" stroke="#a2a2a6"/>
        <text class="wcs" x="31" y="124">WCS</text>
      </svg>
      <svg class="cross" width="72" height="72" viewBox="0 0 72 72"><path stroke="#fff" fill="none" d="M0 35.500h31M41 35.500h31M36.500 0v27M36.500 45v27M31.500 31.500l5-5 5 5v10l-5 5-5-5zM31 31.500h4v10h-4M42 31.500h-4v10h4M32 36.500h3"/></svg>
      <svg class="ucs" width="80" height="80" viewBox="0 0 80 80"><path stroke="#fff" fill="none" d="M10.500 22v49M10 71.500h50M6.500 66.500h9v9h-9z"/><text x="12" y="17">Y</text><text x="65" y="70">X</text></svg>
    </div>
    <div class="vscroll"><button aria-label="向上"><svg class="rot180"><use href="#chev"/></svg></button><i class="thumb"></i><i class="track"></i><button aria-label="向下"><svg><use href="#chev"/></svg></button></div>
    <div class="lower">
      <div class="layouts">
        <div class="nav"><button aria-label="第一个"><svg viewBox="0 0 10 10"><path d="M1.500 1v8M8 1v8L3 5z"/></svg></button><button aria-label="上一个"><svg viewBox="0 0 10 10"><path d="M7 1v8L2 5z"/></svg></button><button aria-label="下一个"><svg viewBox="0 0 10 10"><path d="M3 1v8l5-4z"/></svg></button><button aria-label="最后一个"><svg viewBox="0 0 10 10"><path d="M2 1v8l5-4zM8.500 1v8"/></svg></button></div>
        <button class="lt on">模型</button><button class="lt">布局1</button><i class="slash"></i><button class="lt">布局2</button><i class="slash"></i>
      </div>
      <div class="hscroll"><button aria-label="向左"><svg class="rot90"><use href="#chev"/></svg></button><i class="thumb"></i><i class="track"></i><button aria-label="向右"><svg class="rot270"><use href="#chev"/></svg></button></div>
    </div>
    <div class="corner"></div>
  </section>
  <div class="side right">
    <div class="vbar">
      <i class="vgrip"></i>
      <button aria-label="删除"><svg class="ic"><use href="#erase"/></svg></button>
      <button aria-label="复制"><svg class="ic"><use href="#mcopy"/></svg></button>
      <button aria-label="镜像"><svg class="ic"><use href="#mirror"/></svg></button>
      <button aria-label="偏移"><svg class="ic"><use href="#offset"/></svg></button>
      <button aria-label="阵列"><svg class="ic"><use href="#array"/></svg></button>
      <button aria-label="移动"><svg class="ic"><use href="#move"/></svg></button>
      <button aria-label="旋转"><svg class="ic"><use href="#rotate"/></svg></button>
      <button aria-label="缩放"><svg class="ic"><use href="#scale"/></svg></button>
      <button aria-label="拉伸"><svg class="ic"><use href="#stretch"/></svg></button>
      <button aria-label="修剪"><svg class="ic"><use href="#trim"/></svg></button>
      <button aria-label="延伸"><svg class="ic"><use href="#extend"/></svg></button>
      <button aria-label="打断于点"><svg class="ic"><use href="#break1"/></svg></button>
      <button aria-label="打断"><svg class="ic"><use href="#break2"/></svg></button>
      <button aria-label="合并"><svg class="ic"><use href="#join"/></svg></button>
      <button aria-label="倒角"><svg class="ic"><use href="#chamfer"/></svg></button>
      <button aria-label="圆角"><svg class="ic"><use href="#fillet"/></svg></button>
      <button aria-label="光顺曲线"><svg class="ic"><use href="#blend"/></svg></button>
      <button aria-label="分解"><svg class="ic"><use href="#explode"/></svg></button>
    </div>
    <div class="vbar order">
      <i class="vgrip"></i>
      <button aria-label="前置"><svg class="ic"><use href="#ord1"/></svg></button>
      <button aria-label="后置"><svg class="ic"><use href="#ord2"/></svg></button>
      <button aria-label="置于对象之上"><svg class="ic"><use href="#ord3"/></svg></button>
      <button aria-label="置于对象之下"><svg class="ic"><use href="#ord4"/></svg></button>
      <i class="vsep"></i>
      <button aria-label="文字前置"><svg class="ic" viewBox="0 0 18 18"><text class="abc" x="1" y="7">ABC</text><path d="M3.500 10v3.500h8M12 4.500h3.500V10"/><path fill="#111" stroke="none" d="M17 12v5h-5z"/></svg></button>
      <button aria-label="图案填充后置"><svg class="ic"><use href="#hback"/></svg></button>
    </div>
  </div>
</main>

<section class="cmd">
  <div class="cmdside">
    <i class="dots"></i>
    <button aria-label="关闭命令行"><svg width="14" height="12" viewBox="0 0 14 12"><path d="M3 2l8 8M11 2l-8 8" stroke="#eee" stroke-width="2"/></svg></button>
    <button aria-label="自定义"><svg width="16" height="16" viewBox="0 0 16 16"><path d="M5 5l8 8" stroke="#eee" stroke-width="3"/><path d="M5.500 1.500q2 4-1 5T1.500 4" stroke="#eee" stroke-width="2" fill="none"/></svg></button>
  </div>
  <div class="cmdmain">
    <div class="history">命令：</div>
    <label class="prompt">
      <svg width="16" height="14" viewBox="0 0 16 14"><path fill="#e4e4e4" stroke="#999" d="M.500.500h14v13H.500z"/><path fill="none" stroke="#555" d="M3 4l3 3-3 3M7 10.500h5"/></svg>
      <svg class="ca"><use href="#caret"/></svg>
      <input type="text" placeholder="键入命令" aria-label="命令">
    </label>
  </div>
</section>

<footer class="status">
  <output>299.7522, 113.9800, 0.0000</output>
  <div class="toggles">
    <button aria-label="推断约束"><svg class="ic"><use href="#infer"/></svg></button>
    <button aria-label="捕捉"><svg class="ic"><use href="#snap"/></svg></button>
    <button aria-label="栅格"><svg class="ic"><use href="#grid"/></svg></button>
    <button aria-label="正交"><svg class="ic"><use href="#ortho"/></svg></button>
    <button class="on" aria-label="极轴"><svg class="ic"><use href="#polar"/></svg></button>
    <button class="on" aria-label="对象捕捉"><svg class="ic"><use href="#osnap"/></svg></button>
    <button class="on" aria-label="三维对象捕捉"><svg class="ic"><use href="#osnap3"/></svg></button>
    <button class="on" aria-label="对象追踪"><svg class="ic"><use href="#otrack"/></svg></button>
    <button class="on" aria-label="动态UCS"><svg class="ic"><use href="#ducs"/></svg></button>
    <button aria-label="动态输入"><svg class="ic"><use href="#dyn"/></svg></button>
    <button aria-label="线宽"><svg class="ic"><use href="#lwt"/></svg></button>
    <button class="on" aria-label="透明度"><svg class="ic"><use href="#tpy"/></svg></button>
    <button aria-label="快捷特性"><svg class="ic"><use href="#qp"/></svg></button>
    <button aria-label="选择循环"><svg class="ic"><use href="#sc"/></svg></button>
    <button aria-label="注释监视器"><svg class="ic"><use href="#am"/></svg></button>
  </div>
  <div class="toggles first"><button class="word">模型</button><button aria-label="图纸"><svg class="ic"><use href="#modelpaper"/></svg></button><button aria-label="快速查看"><svg class="ic"><use href="#quickview"/></svg></button></div>
  <div class="toggles second"><button class="ratio"><svg class="ic"><use href="#scaleic"/></svg>1:1<svg class="ca"><use href="#caret"/></svg></button><button aria-label="注释可见性"><svg class="ic"><use href="#annvis"/></svg></button><button aria-label="自动缩放"><svg class="ic"><use href="#annauto"/></svg></button></div>
  <div class="toggles third"><button aria-label="切换工作空间"><svg class="ic"><use href="#gear"/></svg></button><button aria-label="锁定"><svg class="ic"><use href="#lockui"/></svg></button><button aria-label="硬件加速"><svg class="ic"><use href="#iso"/></svg></button></div>
  <div class="toggles third"><button class="lamp" aria-label="隔离对象"><svg class="ic"><use href="#bulb"/></svg></button><button class="narrow" aria-label="状态栏菜单"><svg class="ca"><use href="#caret"/></svg></button><button aria-label="全屏显示"><svg class="ic"><use href="#clean"/></svg></button></div>
  <svg class="resize" width="14" height="14" viewBox="0 0 14 14"><path fill="#ddd" d="M10 1h2v2h-2zM6 5h2v2H6zM10 5h2v2h-2zM2 9h2v2H2zM6 9h2v2H6zM10 9h2v2h-2z"/></svg>
</footer>
</body>
</html>
```

FILE: styles.css
```css
* { box-sizing: border-box; }

html, body { height: 100%; }

body {
  margin: 0;
  padding: 2px 4px 3px;
  display: flex;
  flex-direction: column;
  overflow: hidden;
  background: #5f6161;
  font-family: "Liberation Sans", "Noto Sans CJK SC", sans-serif;
  font-size: 12px;
  color: #111;
  box-shadow: inset 0 0 0 3px #444;
}

.sprite { position: absolute; width: 0; height: 0; }

button {
  border: 0;
  margin: 0;
  padding: 0;
  background: none;
  color: inherit;
  font: inherit;
  display: flex;
  align-items: center;
  justify-content: center;
  flex: none;
}

i { flex: none; }

svg { flex: none; fill: none; }

.ic { width: 18px; height: 18px; display: block; fill: none; stroke: #4c4c4c; }

.ca { width: 8px; height: 8px; display: block; color: #222; }

.titlebar {
  flex: none;
  display: flex;
  height: 49px;
  padding-top: 3px;
  background: linear-gradient(#8a8a8a, #9a9a9a 15%, #5e5e5e 95%);
  border-bottom: 1px solid #444;
}

.logo {
  width: 41px;
  height: 42px;
  border: 1px solid #1c1c1c;
  background: linear-gradient(#999, #6b6b6b);
}

.head-rows { flex: 1; min-width: 0; display: flex; flex-direction: column; padding-left: 5px; }

.quick { display: flex; align-items: center; height: 24px; }

.qb { width: 24px; height: 24px; }

.cb { width: 12px; height: 22px; }

.titlebar .ca { color: #444; }

.mb { width: 16px; height: 22px; }

h1 {
  flex: 1;
  margin: 0;
  text-align: center;
  font-size: 13px;
  font-weight: normal;
  color: #f0f0f0;
}

.point { margin-right: 4px; }

.search {
  width: 180px;
  height: 22px;
  padding: 0 4px;
  border: 1px solid #777;
  background: #f4f4f4;
  font: italic 11px "Noto Sans CJK SC", sans-serif;
}

.search::placeholder { color: #777; opacity: 1; }

.login { display: flex; gap: 3px; margin-left: 2px; color: #eee; }

.services { display: flex; align-items: center; margin-left: 57px; }

.services .qb:nth-child(2) { width: 26px; }

.services .ask { margin-left: 12px; }

.win { display: flex; align-items: center; gap: 5px; margin-left: 18px; padding-right: 4px; }

.win svg { width: 12px; height: 12px; display: block; }

.menu { display: flex; align-items: center; gap: 24px; height: 22px; padding-left: 8px; }

.menu a { color: #f4f4f4; text-decoration: none; white-space: nowrap; }

.menu .win { margin-left: auto; opacity: .8; }

.filetabs {
  flex: none;
  height: 31px;
  padding: 4px 0 0 16px;
  display: flex;
  align-items: flex-start;
  background: linear-gradient(#8b8b8b, #a0a0a0 26px, #5c5c5c 27px, #5c5c5c);
}

.filetab {
  width: 132px;
  height: 23px;
  padding: 0 15px;
  display: flex;
  align-items: center;
  justify-content: space-between;
  background: linear-gradient(#c8c8c8, #b4b4b4);
  clip-path: polygon(0 100%, 3% 90%, 7% 12%, 10% 0, 93% 0, 96% 12%, 99% 90%, 100% 100%);
  font: 10px "Liberation Mono", monospace;
  color: #000;
}

.newtab { margin: 2px 0 0 2px; }

.bars { flex: none; display: flex; flex-direction: column; gap: 3px; overflow: hidden; padding-left: 1px; }

.barrow { display: flex; gap: 3px; height: 24px; overflow: hidden; }

.bar { flex: none; display: flex; align-items: center; background: #ececee; border-bottom: 1px solid #333; }

.barrow:last-child .bar { border-bottom-color: #4c4c4c; }

.bar > button { width: 23px; height: 22px; }

.bar > .cb { width: 12px; }

.bar > .sep { width: 6px; height: 20px; border-left: 1px solid #d8d8d8; }

.grip {
  width: 8px;
  align-self: stretch;
  border: 1px solid #5a5a5a;
  background: repeating-linear-gradient(#444 0 1px, #777 1px 3px);
}

.combo {
  flex: none;
  height: 22px;
  display: flex;
  align-items: center;
  background: #fff;
  border: 1px solid #f4f4f4;
}

.combo select {
  appearance: none;
  flex: 1;
  min-width: 0;
  height: 20px;
  border: 0;
  padding: 0 0 0 8px;
  background: none;
  color: #000;
  font: 10px "Liberation Mono", "Noto Sans CJK SC", monospace;
}

.combo.indent select { padding-left: 17px; }

.combo.tight select { padding-left: 4px; }

.w120 { width: 120px; }
.w150 { width: 150px; }
.w160 { width: 160px; }
.w174 { width: 174px; }
.w300 { width: 300px; }

.combo .t { width: 16px; height: 16px; }

.bx { width: 12px; height: 18px; stroke: #222; margin-left: 1px; }

.bx.lead { margin-left: 4px; }

.combo .bx + select { padding-left: 3px; }

.combo.tight .bx + select { padding-left: 2px; }

.combo hr { width: 60px; margin: 0 0 0 4px; border: 0; border-top: 1px solid #111; }

.combo.short hr { width: 36px; }

.arrow {
  width: 15px;
  height: 19px;
  display: flex;
  align-items: center;
  justify-content: center;
  background: linear-gradient(#d2def8, #b9c9f2);
  pointer-events: none;
}

.arrow svg, .vscroll svg, .hscroll svg { width: 10px; height: 8px; display: block; }

.work { flex: 1; min-height: 0; display: flex; padding: 4px 0; }

.side { flex: none; width: 30px; padding-left: 1px; overflow: hidden; display: flex; flex-direction: column; gap: 3px; }

.side.right { width: 32px; padding-left: 6px; }

.vbar { flex: none; width: 23px; background: #eee; border-bottom: 1px solid #333; }

.vbar button { width: 23px; height: 22px; }

.vgrip {
  display: block;
  height: 9px;
  border: 1px solid #4c4c4c;
  background: repeating-linear-gradient(90deg, #333 0 1px, #777 1px 3px);
}

.order .vgrip { height: 6px; }

.vsep { display: block; height: 6px; border-bottom: 1px solid #aaa; }

.abc { font: bold 7px "DejaVu Sans Mono", monospace; fill: #111; stroke: none; }

.doc {
  flex: 1;
  min-width: 0;
  display: grid;
  grid-template: 1fr 17px / 1fr 18px;
  border: 1px solid #b8b8b8;
}

.canvas { position: relative; background: #000; overflow: hidden; }

.cube { position: absolute; top: 6px; right: 12px; }

.dir { font: 14px "Noto Sans CJK SC", sans-serif; fill: #999; text-anchor: middle; }

.dir.up { font-size: 24px; fill: #444a50; }

.wcs { font: 10px "Liberation Sans", sans-serif; fill: #444; }

.cross { position: absolute; left: 62%; top: 58.4%; }

.ucs { position: absolute; left: 4px; bottom: 6px; }

.ucs text { font: 300 18px Lato, sans-serif; fill: #fff; }

.vscroll { display: flex; flex-direction: column; background: #fdfdfb; padding: 1px; gap: 2px; }

.vscroll button, .hscroll button { width: 15px; height: 15px; background: linear-gradient(135deg, #d8e2fb, #b4c5f0); }

.vscroll .thumb { height: 16px; width: 15px; background: repeating-linear-gradient(#ccd9fb 0 2px, #b8c8f0 2px 3px); }

.track { flex: 1; }

.rot180 { transform: rotate(180deg); }
.rot90 { transform: rotate(90deg); }
.rot270 { transform: rotate(270deg); }

.lower { display: flex; background: #f0ecdb; min-width: 0; }

.layouts { flex: 1; display: flex; align-items: stretch; }

.nav { display: flex; padding: 1px 1px 1px 0; gap: 1px; }

.nav button { width: 13px; border-right: 1px solid #ccc8b8; }

.nav svg { width: 9px; height: 9px; fill: #aaa; stroke: #aaa; }

.lt { padding: 0 4px; align-items: center; line-height: 16px; }

.lt.on {
  padding: 0 10px;
  background: #000;
  color: #fff;
  clip-path: polygon(0 0, 100% 0, 88% 90%, 84% 100%, 14% 100%, 10% 90%);
}

.slash { width: 7px; background: linear-gradient(110deg, transparent 45%, #555 46%, #555 58%, transparent 60%); }

.hscroll { width: 34%; display: flex; align-items: center; gap: 3px; padding: 0 1px 0 5px; background: #fbfaf4; }

.hscroll .thumb { height: 15px; width: 16px; background: repeating-linear-gradient(90deg, #ccd9fb 0 2px, #b8c8f0 2px 3px); }

.corner { background: #ece9d8; }

.cmd { flex: none; display: flex; padding-left: 1px; }

.cmdside {
  width: 22px;
  display: flex;
  flex-direction: column;
  align-items: center;
  justify-content: space-between;
  padding: 4px 0;
  background: linear-gradient(#8a8a8a, #444);
}

.dots { width: 18px; height: 6px; background: repeating-linear-gradient(90deg, #bbb 0 2px, #777 2px 3px); }

.cmdmain { flex: 1; min-width: 0; display: flex; flex-direction: column; }

.history {
  height: 34px;
  padding: 13px 2px 0;
  background: #c8c8c8;
  border-bottom: 1px solid #888;
  line-height: 18px;
}

.prompt { height: 22px; display: flex; align-items: center; background: #fff; padding-left: 5px; }

.prompt .ca { color: #888; margin-left: 1px; }

.prompt input {
  flex: 1;
  min-width: 0;
  margin-left: 4px;
  padding: 0 2px;
  border: 0;
  background: none;
  font: 13px "Noto Sans CJK SC", sans-serif;
  outline: 0;
}

.prompt input::placeholder { color: #aaa; opacity: 1; font-style: italic; }

.status {
  flex: none;
  height: 24px;
  display: flex;
  align-items: center;
  margin-left: 1px;
  border-top: 1px solid #222;
  background: linear-gradient(#666, #8c8c8c);
}

.status output { width: 204px; padding-left: 10px; font: 10px "Liberation Mono", monospace; color: #111; }

.toggles { display: flex; height: 22px; }

.toggles button {
  width: 22px;
  height: 22px;
  border: 1px solid;
  border-color: #c4c4c4 #777 #888 #bbb;
  background: linear-gradient(#b5b5b5, #999);
}

.toggles .on { background: linear-gradient(#c4dde3, #9cc6d0); }

.first { margin-left: auto; }
.second { margin-left: 19px; }
.third { margin-left: 6px; }

.toggles .word { width: 29px; }

.toggles .ratio { width: 53px; gap: 2px; font: 11px "Liberation Mono", monospace; }

.toggles .lamp { width: 31px; background: #8c8c80; border-color: #333; }

.toggles .narrow { width: 10px; }

.resize { margin: 6px 0 0 3px; }
```
